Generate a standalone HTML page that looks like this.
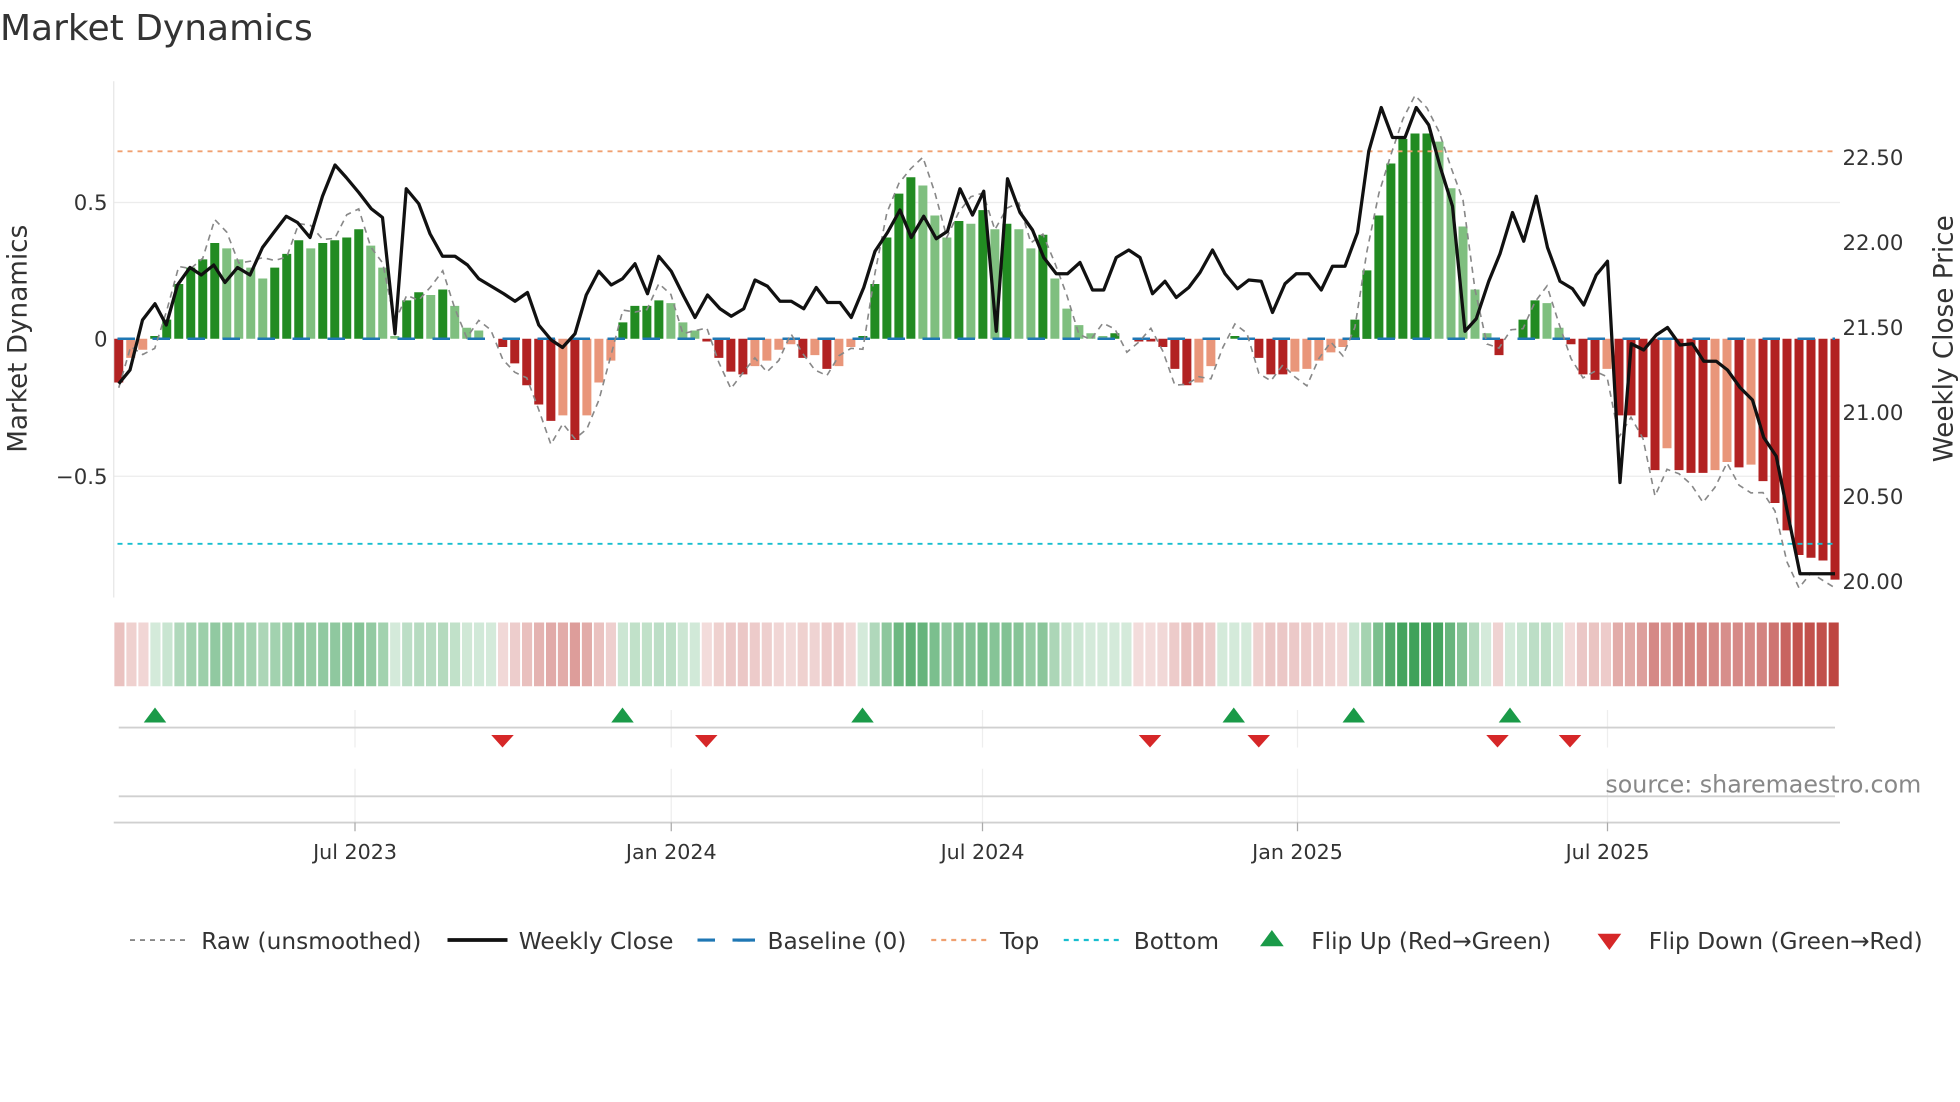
<!DOCTYPE html>
<html><head><meta charset="utf-8"><style>
html,body{margin:0;padding:0;background:#fff;}
svg{display:block;font-family:"DejaVu Sans","Liberation Sans",sans-serif;}
</style></head><body>
<svg id="s" width="1960" height="1102" viewBox="0 0 1568 881.6" xmlns="http://www.w3.org/2000/svg">
<rect width="1568" height="881.6" fill="#fff"/>
<text x="0" y="32" font-size="28.8" fill="#333">Market Dynamics</text>
<line x1="91" y1="162" x2="1472" y2="162" stroke="#ececec" stroke-width="1"/>
<line x1="91" y1="381" x2="1472" y2="381" stroke="#ececec" stroke-width="1"/>
<line x1="91" y1="65" x2="91" y2="478" stroke="#e6e6e6" stroke-width="1"/>
<g id="bars"></g>
<line x1="94" y1="121" x2="1468" y2="121" stroke="#f0a070" stroke-width="1.5" stroke-dasharray="4,4"/>
<line x1="94" y1="435" x2="1468" y2="435" stroke="#17becf" stroke-width="1.5" stroke-dasharray="4,4"/>
<line x1="94" y1="271" x2="1468" y2="271" stroke="#1f77b4" stroke-width="2" stroke-dasharray="14,14"/>
<polyline id="raw" fill="none" stroke="#888" stroke-width="1.3" stroke-dasharray="5,4"/>
<polyline id="price" fill="none" stroke="#111" stroke-width="2.6" stroke-linejoin="round"/>
<g font-size="17" fill="#333">
<text x="86" y="168" text-anchor="end">0.5</text>
<text x="86" y="277" text-anchor="end">0</text>
<text x="86" y="387" text-anchor="end">−0.5</text>
<text x="1474" y="132">22.50</text>
<text x="1474" y="200">22.00</text>
<text x="1474" y="268">21.50</text>
<text x="1474" y="336">21.00</text>
<text x="1474" y="403">20.50</text>
<text x="1474" y="471">20.00</text>
</g>
<text transform="translate(21,271) rotate(-90)" font-size="21" fill="#333" text-anchor="middle">Market Dynamics</text>
<text transform="translate(1562,271) rotate(-90)" font-size="21" fill="#333" text-anchor="middle">Weekly Close Price</text>
<g id="heat"></g>
<g stroke="#eee" stroke-width="1">
<line x1="284" y1="568" x2="284" y2="598"/><line x1="537" y1="568" x2="537" y2="598"/><line x1="786" y1="568" x2="786" y2="598"/><line x1="1038" y1="568" x2="1038" y2="598"/><line x1="1286" y1="568" x2="1286" y2="598"/>
<line x1="284" y1="615" x2="284" y2="658"/><line x1="537" y1="615" x2="537" y2="658"/><line x1="786" y1="615" x2="786" y2="658"/><line x1="1038" y1="615" x2="1038" y2="658"/><line x1="1286" y1="615" x2="1286" y2="658"/>
</g>
<line x1="95" y1="582" x2="1468" y2="582" stroke="#d0d0d0" stroke-width="1.5"/>
<line x1="95" y1="637" x2="1468" y2="637" stroke="#d0d0d0" stroke-width="1.5"/>
<line x1="91" y1="658" x2="1472" y2="658" stroke="#d0d0d0" stroke-width="1.5"/>
<g id="flips"></g>
<text x="1537" y="634" font-size="19" fill="#888" text-anchor="end">source: sharemaestro.com</text>
<g stroke="#aaa" stroke-width="1"><line x1="284" y1="658" x2="284" y2="665"/><line x1="537" y1="658" x2="537" y2="665"/><line x1="786" y1="658" x2="786" y2="665"/><line x1="1038" y1="658" x2="1038" y2="665"/><line x1="1286" y1="658" x2="1286" y2="665"/></g>
<g font-size="16.5" fill="#333" text-anchor="middle">
<text x="284" y="687">Jul 2023</text><text x="537" y="687">Jan 2024</text><text x="786" y="687">Jul 2024</text><text x="1038" y="687">Jan 2025</text><text x="1286" y="687">Jul 2025</text>
</g>
<g font-size="18.6" fill="#333">
<line x1="104" y1="752" x2="150" y2="752" stroke="#888" stroke-width="1.5" stroke-dasharray="4,4"/>
<text x="161" y="759">Raw (unsmoothed)</text>
<line x1="358" y1="752" x2="406" y2="752" stroke="#111" stroke-width="3"/>
<text x="415" y="759">Weekly Close</text>
<line x1="558" y1="752" x2="604" y2="752" stroke="#1f77b4" stroke-width="2.5" stroke-dasharray="14,14"/>
<line x1="590" y1="752" x2="604" y2="752" stroke="#1f77b4" stroke-width="2.5"/>
<text x="614" y="759">Baseline (0)</text>
<line x1="745" y1="752" x2="791" y2="752" stroke="#f0a070" stroke-width="1.8" stroke-dasharray="4,4"/>
<text x="800" y="759">Top</text>
<line x1="851" y1="752" x2="897" y2="752" stroke="#17becf" stroke-width="1.8" stroke-dasharray="4,4"/>
<text x="907" y="759">Bottom</text>
<polygon points="1008,757 1027,757 1017.5,744" fill="#1a9a48"/>
<text x="1049" y="759">Flip Up (Red→Green)</text>
<polygon points="1278,747 1297,747 1287.5,760" fill="#d62728"/>
<text x="1319" y="759">Flip Down (Green→Red)</text>
</g>
</svg>
<script>
(function(){
var V=[-0.16,-0.07,-0.04,0.01,0.07,0.2,0.26,0.29,0.35,0.33,0.29,0.26,0.22,0.26,0.31,0.36,0.33,0.35,0.36,0.37,0.40,0.34,0.26,0.01,0.14,0.17,0.16,0.18,0.12,0.04,0.03,0.0,-0.03,-0.09,-0.17,-0.24,-0.3,-0.28,-0.37,-0.28,-0.16,-0.08,0.06,0.12,0.12,0.14,0.13,0.06,0.03,-0.01,-0.07,-0.12,-0.13,-0.1,-0.08,-0.04,-0.02,-0.07,-0.06,-0.11,-0.10,-0.03,0.01,0.2,0.37,0.53,0.59,0.56,0.45,0.37,0.43,0.42,0.47,0.4,0.42,0.40,0.33,0.38,0.22,0.11,0.05,0.02,0.01,0.02,0.0,-0.01,-0.01,-0.03,-0.11,-0.17,-0.16,-0.1,0.0,0.01,0.0,-0.07,-0.13,-0.13,-0.12,-0.11,-0.08,-0.05,-0.03,0.07,0.25,0.45,0.64,0.73,0.75,0.75,0.72,0.55,0.41,0.18,0.02,-0.06,0.0,0.07,0.14,0.13,0.04,-0.02,-0.13,-0.15,-0.11,-0.28,-0.28,-0.36,-0.48,-0.4,-0.48,-0.49,-0.49,-0.48,-0.45,-0.47,-0.46,-0.52,-0.6,-0.7,-0.79,-0.8,-0.81,-0.88];
var P=[[95,307],[104,296],[114,256],[124,243],[133,260],[142,228],[152,214],[161,220],[171,212],[180,226],[190,214],[200,220],[210,198],[219,186],[229,173],[238,178],[248,190],[258,157],[268,132],[277,142],[287,154],[297,167],[306,174],[316,267],[325,151],[335,163],[344,187],[354,205],[364,205],[374,212],[383,223],[393,229],[403,235],[412,241],[422,234],[431,260],[441,272],[450,278],[460,267],[469,236],[479,217],[489,228],[498,223],[508,211],[518,235],[527,205],[537,217],[547,237],[556,254],[566,236],[576,247],[585,253],[595,247],[604,224],[614,229],[624,241],[633,241],[643,247],[653,230],[662,242],[672,242],[681,254],[691,230],[700,201],[710,186],[720,168],[729,190],[739,173],[749,191],[758,185],[768,151],[778,172],[787,153],[797,265],[806,143],[816,170],[826,184],[835,206],[845,219],[854,219],[864,210],[874,232],[883,232],[893,206],[903,200],[912,206],[922,235],[932,225],[941,238],[951,230],[960,218],[970,200],[980,219],[990,231],[999,224],[1009,225],[1018,250],[1028,227],[1037,219],[1047,219],[1057,232],[1066,213],[1076,213],[1086,186],[1095,121],[1105,86],[1114,110],[1124,110],[1133,86],[1143,100],[1152,133],[1162,165],[1172,265],[1181,255],[1191,225],[1200,203],[1210,170],[1219,193],[1229,157],[1238,198],[1248,225],[1258,231],[1267,244],[1277,220],[1286,209],[1296,386],[1305,275],[1315,280],[1325,268],[1334,262],[1344,276],[1354,275],[1363,289],[1373,289],[1382,296],[1392,310],[1402,320],[1411,350],[1421,365],[1430,410],[1440,459],[1449,459],[1459,459],[1468,459]];
var NS="http://www.w3.org/2000/svg";
function el(t,a,p){var e=document.createElementNS(NS,t);for(var k in a)e.setAttribute(k,a[k]);p.appendChild(e);return e;}
var n=V.length,x0=95,step=(1468-95)/(n-1);
var bars=document.getElementById('bars'),heat=document.getElementById('heat');
var raw=[];
for(var i=0;i<n;i++){
 var v=V[i],pv=i?V[i-1]:v,bx=x0+i*step,by=271-v*219;
 var c;
 if(v>=0)c=(v>=pv)?'#228b22':'#7fbf7f';
 else c=(v<=pv)?'#b22222':'#e9967a';
 var ty=Math.min(by,271),bh=Math.abs(by-271);
 if(bh>0.5)el('rect',{x:(bx-3.6).toFixed(1),y:ty.toFixed(1),width:7.2,height:bh.toFixed(1),fill:c},bars);
 var a=Math.min(1,0.18+Math.abs(v)*0.95);
 var hc=v>=0?'rgba(40,150,70,'+a.toFixed(2)+')':'rgba(190,70,65,'+a.toFixed(2)+')';
 if(v>=0&&v<0.02)hc='rgba(40,150,70,0.2)';
 el('rect',{x:(91+i*(1381/n)+0.5).toFixed(1),y:498,width:(1381/n-1.5).toFixed(2),height:51,fill:hc},heat);
 var rv=v*1.12+0.05*Math.sin(i*1.7);
 if(rv<-0.91)rv=-0.91;
 raw.push(bx.toFixed(1)+','+(271-rv*219).toFixed(1));
}
document.getElementById('raw').setAttribute('points',raw.join(' '));
document.getElementById('price').setAttribute('points',P.map(function(p){return p.join(',')}).join(' '));
var fl=document.getElementById('flips');
[124,498,690,987,1083,1208].forEach(function(x){el('polygon',{points:(x-9)+',578 '+(x+9)+',578 '+x+',566',fill:'#1a9a48'},fl);});
[402,565,920,1007,1198,1256].forEach(function(x){el('polygon',{points:(x-9)+',588 '+(x+9)+',588 '+x+',598',fill:'#d62728'},fl);});
})();
</script>
</body></html>
